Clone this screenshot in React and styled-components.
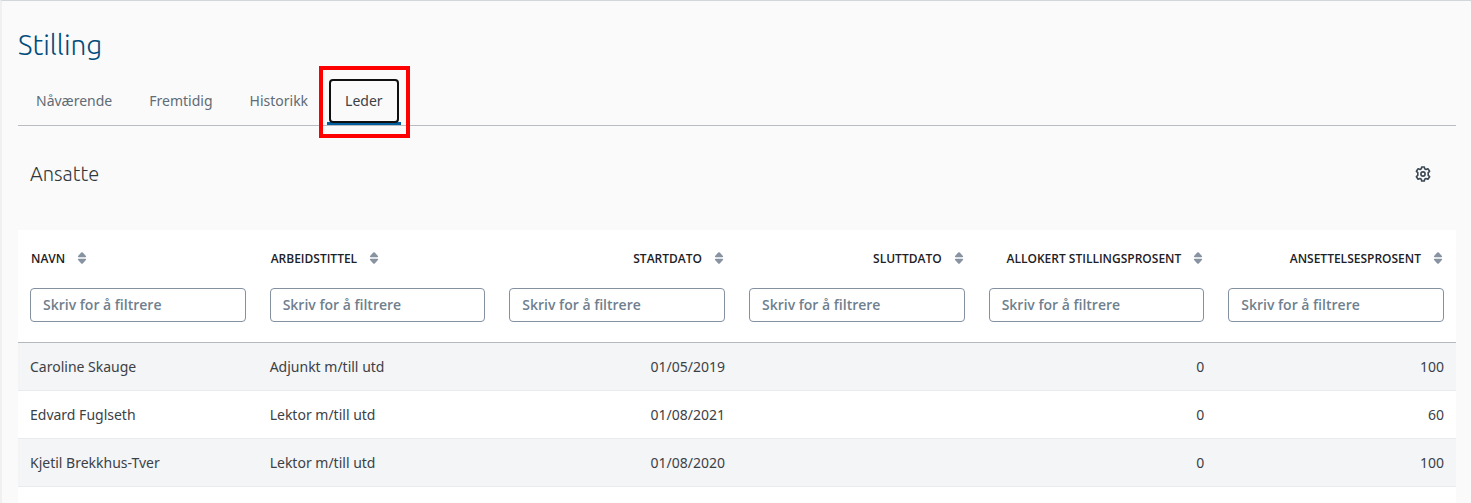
import { useState } from 'react'
import styled, { createGlobalStyle } from 'styled-components'

const GlobalStyle = createGlobalStyle`
  * {
    box-sizing: border-box;
  }

  body {
    margin: 0;
    background: #fafafa;
    font-family: 'Noto Sans', 'Open Sans', sans-serif;
    font-size: 14px;
    color: #3c4146;
  }
`

const Page = styled.main`
  display: flex;
  flex-direction: column;
  min-height: 100vh;
  padding: 0 15px 0 16px;
  border-left: 2px solid #f0f0f0;
  border-top: 1px solid #d3d6d9;
`

const Title = styled.h1`
  margin: 24px 0 12px;
  font-family: Ubuntu, 'Noto Sans', sans-serif;
  font-weight: 300;
  font-size: 28px;
  line-height: 40px;
  color: #004b7c;
`

const TabList = styled.div`
  display: flex;
  gap: 1px;
  height: 49px;
  border-bottom: 1px solid #b9bdc1;
`

const Tab = styled.button`
  position: relative;
  height: 48px;
  padding: 2px 18px 0;
  border: none;
  border-bottom: 3px solid ${props => (props.$active ? '#005e9e' : 'transparent')};
  background: transparent;
  font: inherit;
  color: ${props => (props.$active ? '#3c4146' : '#5f6b76')};
  cursor: pointer;
  outline: none;
`

const FocusRing = styled.span`
  position: absolute;
  inset: 2px 2px -1px;
  border: 2px solid #101010;
  border-radius: 4px;
`

const Marker = styled.span`
  position: absolute;
  inset: -11px -9px -16px -8px;
  border: 4px solid #ff0000;
`

const SectionHeader = styled.header`
  display: flex;
  align-items: center;
  justify-content: space-between;
  padding: 32px 25px 40px 12px;
`

const SectionTitle = styled.h2`
  margin: 0;
  font-family: Ubuntu, 'Noto Sans', sans-serif;
  font-weight: 300;
  font-size: 20px;
  line-height: 32px;
  color: #32373c;
`

const IconButton = styled.button`
  display: flex;
  padding: 0;
  border: none;
  background: transparent;
  color: #3b4854;
  cursor: pointer;
`

const Panel = styled.section`
  flex: 1;
  background: #fff;
`

const Table = styled.table`
  width: 100%;
  table-layout: fixed;
  border-collapse: collapse;
`

const HeadCell = styled.th`
  height: 112px;
  padding: 16px 12px 20px;
  border-bottom: 1px solid #b5b9bd;
  vertical-align: top;
  font-weight: 400;
`

const SortButton = styled.button`
  display: flex;
  align-items: center;
  gap: 12px;
  height: 24px;
  margin: 0 0 18px ${props => (props.$right ? 'auto' : '0')};
  padding: 0 1px;
  border: none;
  background: transparent;
  font-family: 'Open Sans', sans-serif;
  font-size: 12px;
  font-weight: 600;
  text-transform: uppercase;
  white-space: nowrap;
  color: #1d2126;
  cursor: pointer;
`

const Filter = styled.input`
  display: block;
  width: 100%;
  height: 34px;
  padding: 0 12px 2px;
  border: 1px solid #8491a0;
  border-radius: 4px;
  background: #fff;
  font-family: 'Open Sans', sans-serif;
  font-size: 14px;
  font-weight: 600;
  color: #3c4146;

  &::placeholder {
    color: #6f7f8e;
    opacity: 1;
  }
`

const Row = styled.tr`
  height: 48px;
  border-bottom: 1px solid #e9ebed;

  &:nth-child(odd) {
    background: #f3f5f7;
  }
`

const Cell = styled.td`
  padding: 0 12px;
  text-align: ${props => (props.$right ? 'right' : 'left')};
`

const tabs = ['Nåværende', 'Fremtidig', 'Historikk', 'Leder']

const columns = [
  { key: 'navn', label: 'Navn' },
  { key: 'tittel', label: 'Arbeidstittel' },
  { key: 'start', label: 'Startdato', right: true },
  { key: 'slutt', label: 'Sluttdato', right: true },
  { key: 'allokert', label: 'Allokert stillingsprosent', right: true },
  { key: 'prosent', label: 'Ansettelsesprosent', right: true },
]

const ansatte = [
  { navn: 'Caroline Skauge', tittel: 'Adjunkt m/till utd', start: '01/05/2019', slutt: '', allokert: '0', prosent: '100' },
  { navn: 'Edvard Fuglseth', tittel: 'Lektor m/till utd', start: '01/08/2021', slutt: '', allokert: '0', prosent: '60' },
  { navn: 'Kjetil Brekkhus-Tver', tittel: 'Lektor m/till utd', start: '01/08/2020', slutt: '', allokert: '0', prosent: '100' },
]

function SortIcon() {
  return (
    <svg width="10" height="12" viewBox="0 0 10 12" fill="#8793a1" aria-hidden="true">
      <path d="M4.2.6a1.1 1.1 0 0 1 1.6 0L8.9 4c.5.6.2 1.3-.6 1.3H1.7C.9 5.3.6 4.6 1.1 4z" />
      <path d="M4.2 11.4a1.1 1.1 0 0 0 1.6 0L8.9 8c.5-.6.2-1.3-.6-1.3H1.7C.9 6.7.6 7.4 1.1 8z" />
    </svg>
  )
}

function GearIcon() {
  return (
    <svg width="16" height="16" viewBox="0 0 16 16" fill="none" stroke="currentColor" strokeWidth="1.6" strokeLinejoin="round" aria-hidden="true">
      <path d="M6.7 1h2.6l.4 1.8 1.3.7 1.9-.7 1.7 2.5-1.4 1.3v2.8l1.4 1.3-1.7 2.5-1.9-.7-1.3.7-.4 1.8H6.7l-.4-1.8-1.3-.7-1.9.7-1.7-2.5 1.4-1.3V6.6L1.4 5.3l1.7-2.5 1.9.7 1.3-.7z" />
      <circle cx="8" cy="8" r="2.1" />
    </svg>
  )
}

export default function App() {
  const [activeTab, setActiveTab] = useState('Leder')
  const [filters, setFilters] = useState({})

  const handleFilter = (e) => {
    setFilters({ ...filters, [e.target.name]: e.target.value })
  }

  const rows = ansatte.filter((row) =>
    columns.every(({ key }) => row[key].toLowerCase().includes((filters[key] || '').toLowerCase()))
  )

  return (
    <>
      <GlobalStyle />
      <Page>
        <Title>Stilling</Title>

        <TabList role="tablist">
          {tabs.map((tab) => (
            <Tab
              key={tab}
              type="button"
              role="tab"
              aria-selected={tab === activeTab}
              $active={tab === activeTab}
              onClick={() => setActiveTab(tab)}
            >
              {tab}
              {tab === activeTab && <FocusRing />}
              {tab === 'Leder' && <Marker />}
            </Tab>
          ))}
        </TabList>

        <SectionHeader>
          <SectionTitle>Ansatte</SectionTitle>
          <IconButton type="button" aria-label="Innstillinger">
            <GearIcon />
          </IconButton>
        </SectionHeader>

        <Panel>
          <Table>
            <thead>
              <tr>
                {columns.map(({ key, label, right }) => (
                  <HeadCell key={key} scope="col">
                    <SortButton type="button" $right={right}>
                      {label}
                      <SortIcon />
                    </SortButton>
                    <Filter
                      name={key}
                      aria-label={label}
                      placeholder="Skriv for å filtrere"
                      value={filters[key] || ''}
                      onChange={handleFilter}
                    />
                  </HeadCell>
                ))}
              </tr>
            </thead>
            <tbody>
              {rows.map((row) => (
                <Row key={row.navn}>
                  {columns.map(({ key, right }) => (
                    <Cell key={key} $right={right}>{row[key]}</Cell>
                  ))}
                </Row>
              ))}
            </tbody>
          </Table>
        </Panel>
      </Page>
    </>
  )
}
